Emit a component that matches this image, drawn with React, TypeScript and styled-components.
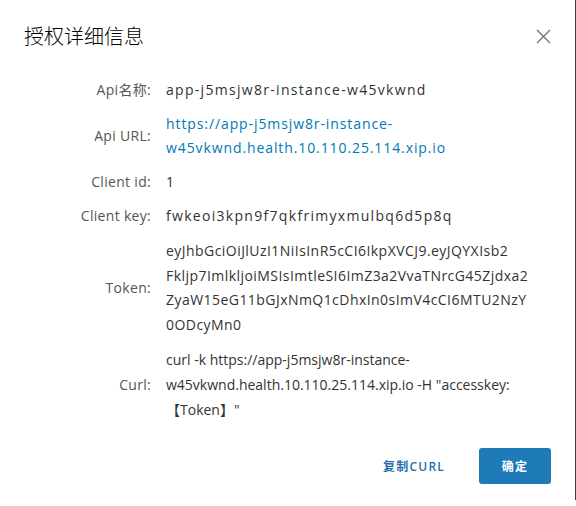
import styled, { createGlobalStyle } from "styled-components";

const GlobalStyle = createGlobalStyle`
  html, body {
    margin: 0;
    padding: 0;
    background: #fff;
  }
  body {
    font-family: "Open Sans", "Noto Sans CJK SC", sans-serif;
    -webkit-font-smoothing: antialiased;
  }
`;

const Page = styled.div`
  display: flex;
  width: 576px;
  height: 506px;
  overflow: hidden;
`;

const Modal = styled.div`
  width: 575px;
  height: 500px;
  background: #fff;
  display: flex;
  flex-direction: column;
`;

const Edge = styled.div`
  width: 1px;
  height: 500px;
  background: #3c3c3c;
`;

const Header = styled.div`
  display: flex;
  align-items: center;
  justify-content: space-between;
  padding: 24px 24px 0 24px;
  height: 24px;
`;

const Title = styled.h3`
  margin: 0;
  font-family: "Noto Sans CJK SC", sans-serif;
  font-weight: 300;
  font-size: 20px;
  line-height: 24px;
  color: #000;
`;

const Close = styled.button`
  border: 0;
  background: none;
  padding: 0;
  width: 16px;
  height: 16px;
  display: flex;
  align-items: center;
  justify-content: center;
  cursor: pointer;
`;

const Body = styled.div`
  display: grid;
  grid-template-columns: 127px 1fr;
  column-gap: 15px;
  row-gap: 10px;
  padding: 30px 24px 0 24px;
  font-size: 14px;
  line-height: 24px;
`;

const Label = styled.div`
  align-self: center;
  text-align: right;
  color: #565656;
  white-space: nowrap;
  letter-spacing: 0.3px;
`;

const Value = styled.div<{ $link?: boolean; $tall?: boolean; $spacing: number }>`
  color: ${(p) => (p.$link ? "#0079b8" : "#333")};
  line-height: ${(p) => (p.$tall ? "24.6px" : "24px")};
  letter-spacing: ${(p) => p.$spacing}px;
  margin-top: ${(p) => (p.$tall ? "1px" : "0")};
`;

const Line = styled.span`
  display: block;
  white-space: nowrap;
`;

const Footer = styled.div`
  display: flex;
  justify-content: flex-end;
  align-items: center;
  gap: 22px;
  padding: 26px 24px 0 24px;
`;

const Button = styled.button<{ $primary?: boolean }>`
  height: 36px;
  border-radius: 3px;
  border: 0;
  font-family: "Open Sans", "Noto Sans CJK SC", sans-serif;
  font-size: 12px;
  letter-spacing: 1.2px;
  cursor: pointer;
  font-weight: ${(p) => (p.$primary ? 700 : 600)};
  padding: ${(p) => (p.$primary ? "0" : "0 12px")};
  width: ${(p) => (p.$primary ? "72px" : "auto")};
  background: ${(p) => (p.$primary ? "#1f7ab8" : "transparent")};
  color: ${(p) => (p.$primary ? "#fff" : "#1f6fae")};
`;

type Row = {
  label: string;
  lines: string[];
  link?: boolean;
  tall?: boolean;
  spacing: number;
};

const rows: Row[] = [
  { label: "Api名称:", lines: ["app-j5msjw8r-instance-w45vkwnd"], spacing: 1.3 },
  {
    label: "Api URL:",
    lines: ["https://app-j5msjw8r-instance-", "w45vkwnd.health.10.110.25.114.xip.io"],
    link: true,
    spacing: 0.9,
  },
  { label: "Client id:", lines: ["1"], spacing: 1 },
  { label: "Client key:", lines: ["fwkeoi3kpn9f7qkfrimyxmulbq6d5p8q"], spacing: 1.3 },
  {
    label: "Token:",
    lines: [
      "eyJhbGciOiJlUzI1NiIsInR5cCI6IkpXVCJ9.eyJQYXIsb2",
      "Fkljp7ImlkljoiMSIsImtleSI6ImZ3a2VvaTNrcG45Zjdxa2",
      "ZyaW15eG11bGJxNmQ1cDhxIn0sImV4cCI6MTU2NzY",
      "0ODcyMn0",
    ],
    tall: true,
    spacing: 0.45,
  },
  {
    label: "Curl:",
    lines: [
      "curl -k https://app-j5msjw8r-instance-",
      'w45vkwnd.health.10.110.25.114.xip.io -H "accesskey:',
      "【Token】\"",
    ],
    tall: true,
    spacing: 0,
  },
];

export default function App() {
  return (
    <Page>
      <GlobalStyle />
      <Modal>
        <Header>
          <Title>授权详细信息</Title>
          <Close aria-label="close">
            <svg width="15" height="15" viewBox="0 0 15 15">
              <path d="M1 1L14 14M14 1L1 14" stroke="#747474" strokeWidth="1.4" />
            </svg>
          </Close>
        </Header>
        <Body>
          {rows.map((r) => (
            <>
              <Label key={r.label + "l"}>{r.label}</Label>
              <Value key={r.label + "v"} $link={r.link} $tall={r.tall} $spacing={r.spacing}>
                {r.lines.map((l, i) => (
                  <Line key={i}>{l}</Line>
                ))}
              </Value>
            </>
          ))}
        </Body>
        <Footer>
          <Button>复制CURL</Button>
          <Button $primary>确定</Button>
        </Footer>
      </Modal>
      <Edge />
    </Page>
  );
}
